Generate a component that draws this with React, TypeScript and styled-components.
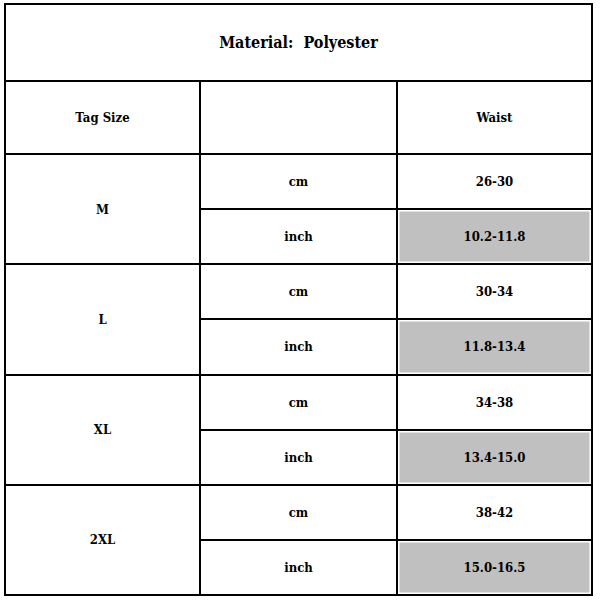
import React from "react";
import styled, { createGlobalStyle } from "styled-components";

const Global = createGlobalStyle`
  html, body { margin: 0; padding: 0; background: #fff; }
  body { color: #000; }
`;

const Page = styled.div`
  padding: 3px 0 0 4px;
`;

const Table = styled.div`
  display: grid;
  width: 589px;
  height: 593px;
  box-sizing: border-box;
  background: #000;
  padding: 2px;
  gap: 2px;
  grid-template-columns: 193px 195px 193px;
  grid-template-rows: 75px 71px repeat(8, 1fr);
`;

const Cell = styled.div<{ $span?: number; $rows?: number; $shaded?: boolean }>`
  display: flex;
  align-items: center;
  justify-content: center;
  background: ${(p) => (p.$shaded ? "#c0c0c0" : "#fff")};
  box-shadow: ${(p) => (p.$shaded ? "inset 0 0 0 1.5px #fff" : "none")};
  font-family: "DejaVu Serif Condensed", "DejaVu Serif", serif;
  font-stretch: condensed;
  font-size: 13px;
  font-weight: bold;
  white-space: pre;
  grid-column: ${(p) => (p.$span ? `span ${p.$span}` : "auto")};
  grid-row: ${(p) => (p.$rows ? `span ${p.$rows}` : "auto")};
`;

const Title = styled(Cell)`
  font-size: 16px;
`;

const data = [
  { size: "M", cm: "26-30", inch: "10.2-11.8" },
  { size: "L", cm: "30-34", inch: "11.8-13.4" },
  { size: "XL", cm: "34-38", inch: "13.4-15.0" },
  { size: "2XL", cm: "38-42", inch: "15.0-16.5" },
];

export default function App() {
  return (
    <>
      <Global />
      <Page>
        <Table>
          <Title $span={3}>{"Material:  Polyester"}</Title>
          <Cell>Tag Size</Cell>
          <Cell />
          <Cell>Waist</Cell>
          {data.map((d) => (
            <React.Fragment key={d.size}>
              <Cell $rows={2}>{d.size}</Cell>
              <Cell>cm</Cell>
              <Cell>{d.cm}</Cell>
              <Cell>inch</Cell>
              <Cell $shaded>{d.inch}</Cell>
            </React.Fragment>
          ))}
        </Table>
      </Page>
    </>
  );
}
